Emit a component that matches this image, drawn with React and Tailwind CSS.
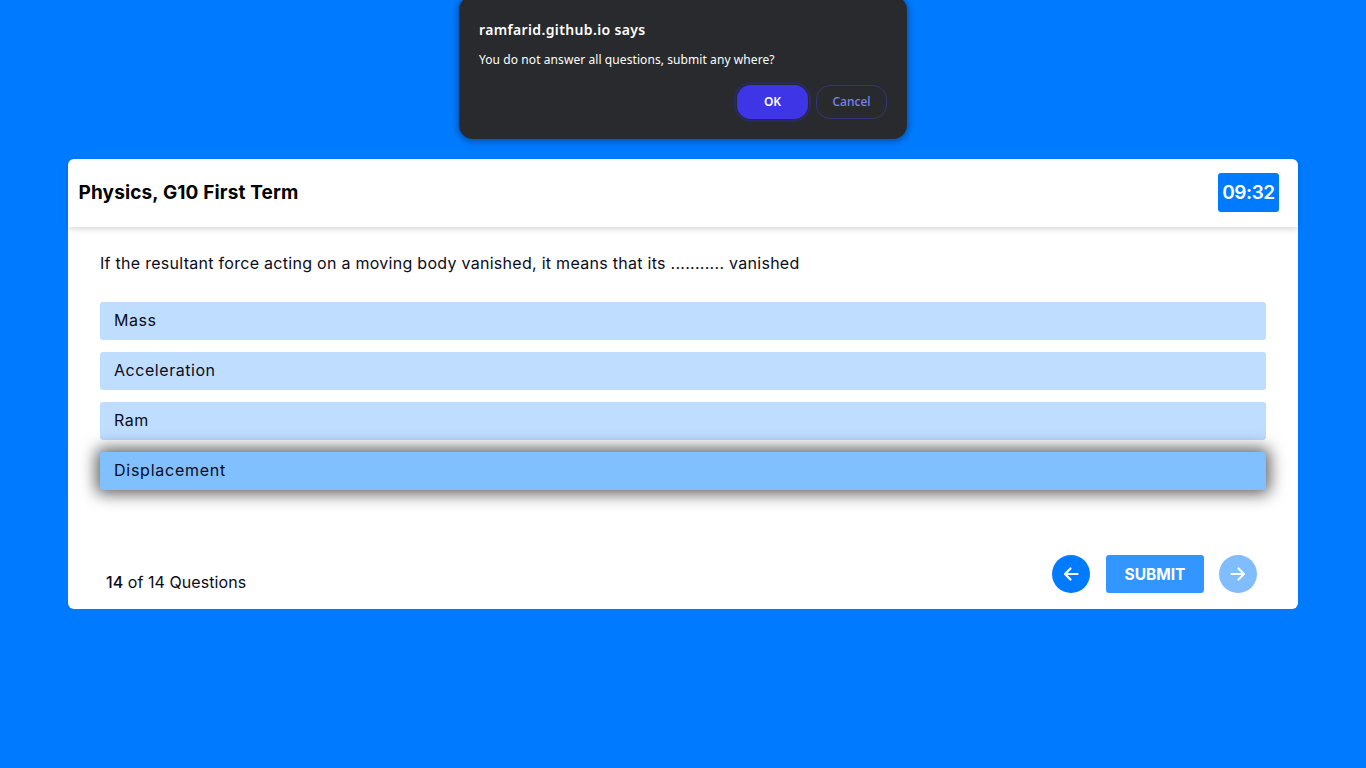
import React from "react";

const body = { fontFamily: '"Inter", "Liberation Sans", sans-serif' };

function Arrow({ dir }) {
  return (
    <svg width="16" height="16" viewBox="0 0 16 16" fill="none" stroke="#fff" strokeWidth="2.2" strokeLinecap="round" strokeLinejoin="round">
      {dir === "left" ? <path d="M14.5 8H2M7.5 2.5 2 8l5.5 5.5" /> : <path d="M1.5 8H14M8.500 2.500 14 8l-5.500 5.500" />}
    </svg>
  );
}

function Option({ children, selected }) {
  return (
    <div
      className={
        "h-[38px] rounded-[3px] pl-[14px] pb-[2px] flex items-center text-[16px] text-[#0b0b20] " +
        (selected ? "tracking-[0.75px] bg-[#80c0ff] shadow-[0_0_16px_4px_rgba(0,0,0,0.62)]" : "tracking-[0.55px] bg-[#bfdeff]")
      }
    >
      {children}
    </div>
  );
}

export default function App() {
  return (
    <div className="min-h-[768px] bg-[#007bff] pt-[159px] relative overflow-hidden font-['Inter',sans-serif]">
      <div className="absolute left-[459px] top-[-4px] w-[448px] h-[143px] rounded-[14px] bg-[#292a2d] shadow-[0_1px_6px_2px_rgba(0,0,0,0.3)] font-['Noto_Sans',sans-serif] text-white">
        <div className="pl-[20px] pt-[24px] text-[14px] leading-[20px] font-semibold tracking-[0.36px]">ramfarid.github.io says</div>
        <div className="pl-[20px] pt-[10px] text-[12px] leading-[20px] tracking-[0.08px]">You do not answer all questions, submit any where?</div>
        <div className="flex justify-end items-center gap-[8px] pr-[20px] pt-[15px]">
          <button className="w-[71px] h-[34px] rounded-[14px] bg-[#3e36e6] text-[12px] font-semibold text-white shadow-[0_0_0_1px_#292a2d,0_0_0_3px_#2a2a62]">OK</button>
          <button className="w-[71px] h-[34px] rounded-[14px] border border-[#33357a] text-[12px] font-medium text-[#7c83ea]">Cancel</button>
        </div>
      </div>

      <div className="w-[1230px] h-[450px] ml-[68px] bg-white rounded-[6px] text-[#0b0b20]" style={body}>
        <header className="h-[68px] flex items-center justify-between pl-[10.500px] pr-[19px] shadow-[0_2px_6px_rgba(0,0,0,0.16)]">
          <h1 className="text-[19px] font-bold text-black tracking-[0.14px]">Physics, G10 First Term</h1>
          <div className="w-[61px] h-[39px] mb-[2px] pt-[2px] rounded-[3px] bg-[#007bff] text-white text-[19px] font-semibold tracking-[-0.45px] flex items-center justify-center">09:32</div>
        </header>
        <div className="pl-[32px] pr-[32px]">
          <p className="pt-[25px] h-[75px] text-[16px] leading-[22px] tracking-[0.28px]">If the resultant force acting on a moving body vanished, it means that its ........... vanished</p>
          <div className="flex flex-col gap-[12px]">
            <Option>Mass</Option>
            <Option>Acceleration</Option>
            <Option>Ram</Option>
            <Option selected>Displacement</Option>
          </div>
          <div className="flex items-start justify-between pt-[65px] pl-[6px] pr-[9px]">
            <div className="pt-[16px] text-[16px] leading-[22px] tracking-[0.06px]"><span className="font-medium">14</span> of 14 Questions</div>
            <div className="flex items-center">
              <button className="w-[38px] h-[38px] rounded-full bg-[#007bff] flex items-center justify-center"><Arrow dir="left" /></button>
              <button className="w-[98px] h-[38px] ml-[16px] pt-[1px] rounded-[3px] bg-[#3395ff] text-white text-[15.5px] font-bold">SUBMIT</button>
              <button className="w-[38px] h-[38px] ml-[15px] rounded-full bg-[#80bdff] flex items-center justify-center"><Arrow dir="right" /></button>
            </div>
          </div>
        </div>
      </div>
    </div>
  );
}
